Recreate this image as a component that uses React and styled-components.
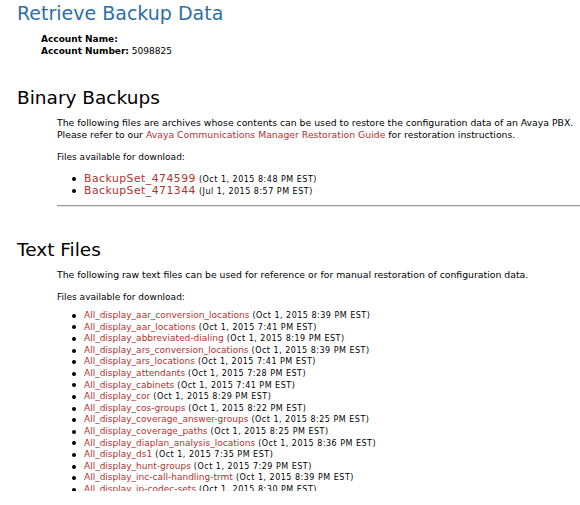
import React from 'react'
import styled, { createGlobalStyle } from 'styled-components'

const GlobalStyle = createGlobalStyle`
  html, body {
    margin: 0;
    padding: 0;
    background: #ffffff;
  }
  body {
    font-family: "DejaVu Sans", Verdana, sans-serif;
    color: #000000;
  }
`

const Page = styled.div`
  height: 491px;
  overflow: hidden;
  padding: 0 0 0 17px;
  box-sizing: border-box;
`

const Title = styled.h1`
  margin: 0;
  padding-top: 1px;
  font-size: 19px;
  line-height: 24px;
  font-weight: normal;
  color: #2f6ea5;
`

const Account = styled.div`
  margin: 8px 0 0 24px;
  font-size: 9px;
  line-height: 12px;
`

const Label = styled.b`
  font-weight: bold;
`

const SectionTitle = styled.h2`
  margin: ${props => props.top || '29px'} 0 0 0;
  font-size: 18.5px;
  line-height: 24px;
  font-weight: normal;
  color: #000000;
`

const SectionBody = styled.div`
  margin-left: 40px;
  padding-top: 7px;
  font-size: 9px;
  line-height: 12px;
`

const Para = styled.p`
  margin: 0 0 ${props => props.mb || '10px'} 0;
  font-size: ${props => props.size || '9.3px'};
`

const Link = styled.a`
  color: #b3312e;
  text-decoration: none;
  line-height: 1;
  letter-spacing: ${props => props.spacing || '0'};
`

const FileList = styled.ul`
  margin: 0;
  padding: 0 0 0 27px;
  list-style: none;
`

const FileItem = styled.li`
  position: relative;
  height: ${props => props.lh || '11.6px'};
  font-size: ${props => props.size || '9px'};
  line-height: ${props => props.lh || '11.6px'};
  white-space: nowrap;

  &::before {
    content: '';
    position: absolute;
    left: -12px;
    top: 50%;
    width: 4px;
    height: 4px;
    margin-top: -2px;
    border-radius: 50%;
    background: #000000;
  }
`

const Stamp = styled.span`
  font-size: 8px;
  line-height: 1;
  letter-spacing: 0.5px;
  margin-left: 3px;
`

const Rule = styled.hr`
  margin: 8px 0 0 0;
  border: 0;
  border-top: 1px solid #9a9a9a;
  border-bottom: 1px solid #e2e2e2;
  height: 0;
`

const backups = [
  ['BackupSet_474599', 'Oct 1, 2015 8:48 PM EST'],
  ['BackupSet_471344', 'Jul 1, 2015 8:57 PM EST'],
]

const textFiles = [
  ['All_display_aar_conversion_locations', 'Oct 1, 2015 8:39 PM EST'],
  ['All_display_aar_locations', 'Oct 1, 2015 7:41 PM EST'],
  ['All_display_abbreviated-dialing', 'Oct 1, 2015 8:19 PM EST'],
  ['All_display_ars_conversion_locations', 'Oct 1, 2015 8:39 PM EST'],
  ['All_display_ars_locations', 'Oct 1, 2015 7:41 PM EST'],
  ['All_display_attendants', 'Oct 1, 2015 7:28 PM EST'],
  ['All_display_cabinets', 'Oct 1, 2015 7:41 PM EST'],
  ['All_display_cor', 'Oct 1, 2015 8:29 PM EST'],
  ['All_display_cos-groups', 'Oct 1, 2015 8:22 PM EST'],
  ['All_display_coverage_answer-groups', 'Oct 1, 2015 8:25 PM EST'],
  ['All_display_coverage_paths', 'Oct 1, 2015 8:25 PM EST'],
  ['All_display_diaplan_analysis_locations', 'Oct 1, 2015 8:36 PM EST'],
  ['All_display_ds1', 'Oct 1, 2015 7:35 PM EST'],
  ['All_display_hunt-groups', 'Oct 1, 2015 7:29 PM EST'],
  ['All_display_inc-call-handling-trmt', 'Oct 1, 2015 8:39 PM EST'],
  ['All_display_ip-codec-sets', 'Oct 1, 2015 8:30 PM EST'],
]

function App() {
  return (
    <>
      <GlobalStyle />
      <Page>
        <Title>Retrieve Backup Data</Title>
        <Account>
          <div><Label>Account Name:</Label></div>
          <div><Label>Account Number:</Label> 5098825</div>
        </Account>

        <SectionTitle>Binary Backups</SectionTitle>
        <SectionBody>
          <Para>
            The following files are archives whose contents can be used to restore the configuration data of an Avaya PBX.
            <br />
            Please refer to our <Link href="#">Avaya Communications Manager Restoration Guide</Link> for restoration instructions.
          </Para>
          <Para size="9px">Files available for download:</Para>
          <FileList>
            {backups.map(([name, date]) => (
              <FileItem key={name} lh="12px" size="10.8px">
                <Link href="#" spacing="0.5px">{name}</Link>
                <Stamp>({date})</Stamp>
              </FileItem>
            ))}
          </FileList>
          <Rule />
        </SectionBody>

        <SectionTitle top="31px">Text Files</SectionTitle>
        <SectionBody>
          <Para>The following raw text files can be used for reference or for manual restoration of configuration data.</Para>
          <Para size="9px" mb="7px">Files available for download:</Para>
          <FileList>
            {textFiles.map(([name, date]) => (
              <FileItem key={name}>
                <Link href="#">{name}</Link>
                <Stamp>({date})</Stamp>
              </FileItem>
            ))}
          </FileList>
        </SectionBody>
      </Page>
    </>
  )
}

export default App
